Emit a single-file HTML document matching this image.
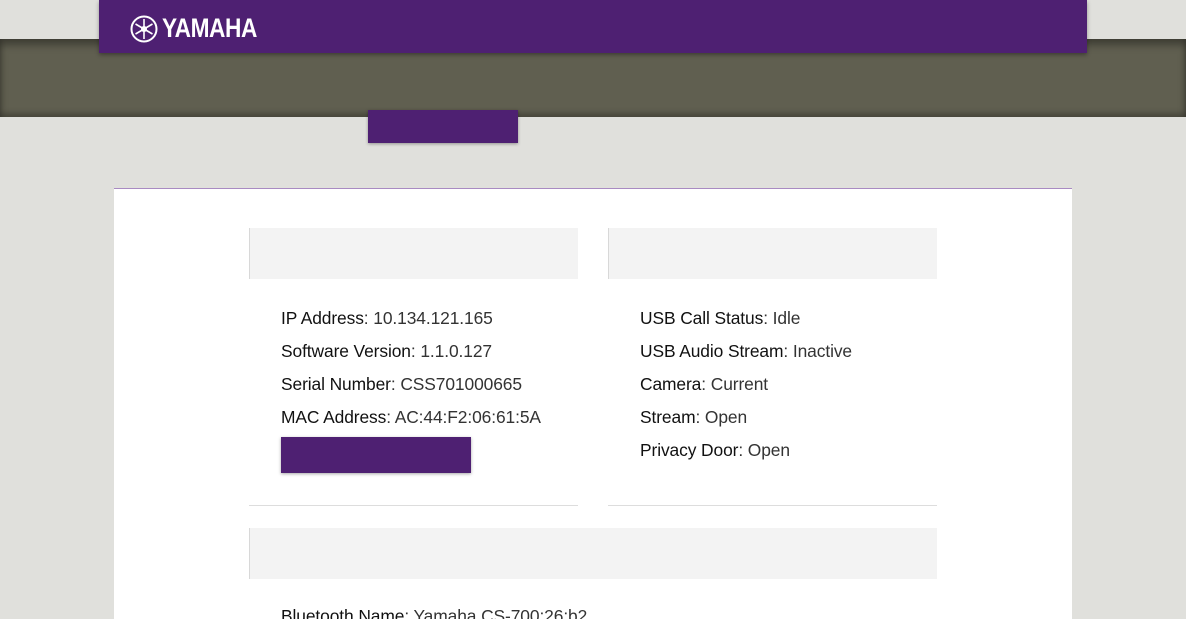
<!DOCTYPE html>
<html><head><style>
html,body{margin:0;width:1186px;height:619px;overflow:hidden}
body{background:#e0e0dc;font-family:"Liberation Sans",sans-serif;position:relative}
.olive{position:absolute;left:0;top:39px;width:1186px;height:78px;background:#605f50;box-shadow:inset 0 6px 8px rgba(0,0,0,.35),inset 0 -4px 6px rgba(0,0,0,.25)}
.top{position:absolute;left:99px;top:0;width:988px;height:53px;background:#4e2072;box-shadow:0 2px 4px rgba(0,0,0,.35)}
.logo{position:absolute;left:130px;top:13px;color:#fff;font-weight:bold;font-size:27px;display:flex;align-items:center;gap:4px}
.logo span{display:inline-block;transform:scaleX(.84);transform-origin:left center;letter-spacing:-0.5px}
.btn{position:absolute;background:#4e2072;box-shadow:0 1px 3px rgba(0,0,0,.35)}
.card{position:absolute;left:114px;top:188px;width:958px;height:431px;background:#fff;border-top:1px solid #a98bc2}
.ph{position:absolute;background:#f3f3f3;border-left:1px solid #d8d8d8;height:51px}
.line{position:absolute;height:1px;background:#ddd}
.t{position:absolute;font-size:17.4px;color:#333;line-height:33px;font-weight:300;letter-spacing:-0.1px}
.t b{font-weight:normal;color:#111}
</style></head><body>
<div class="olive"></div>
<div class="top"></div>
<div class="logo"><svg width="28" height="28" viewBox="0 0 28 28"><circle cx="14" cy="14" r="12.5" fill="none" stroke="#fff" stroke-width="2"/><g stroke="#fff" stroke-width="1.6"><line x1="14" y1="4" x2="14" y2="24"/><line x1="5.5" y1="9" x2="22.5" y2="19"/><line x1="22.5" y1="9" x2="5.5" y2="19"/></g><circle cx="14" cy="14" r="3" fill="#fff"/></svg><span>YAMAHA</span></div>
<div class="btn" style="left:368px;top:110px;width:150px;height:33px"></div>
<div class="card"></div>
<div class="ph" style="left:249px;top:228px;width:328px"></div>
<div class="ph" style="left:608px;top:228px;width:328px"></div>
<div class="t" style="left:281px;top:302px"><b>IP Address</b>: 10.134.121.165<br><b>Software Version</b>: 1.1.0.127<br><b>Serial Number</b>: CSS701000665<br><b>MAC Address</b>: AC:44:F2:06:61:5A</div>
<div class="btn" style="left:281px;top:437px;width:190px;height:36px"></div>
<div class="t" style="left:640px;top:302px"><b>USB Call Status</b>: Idle<br><b>USB Audio Stream</b>: Inactive<br><b>Camera</b>: Current<br><b>Stream</b>: Open<br><b>Privacy Door</b>: Open</div>
<div class="line" style="left:249px;top:505px;width:329px"></div>
<div class="line" style="left:608px;top:505px;width:329px"></div>
<div class="ph" style="left:249px;top:528px;width:687px"></div>
<div class="t" style="left:281px;top:600px"><b>Bluetooth Name</b>: Yamaha CS-700:26:b2</div>
</body></html>
